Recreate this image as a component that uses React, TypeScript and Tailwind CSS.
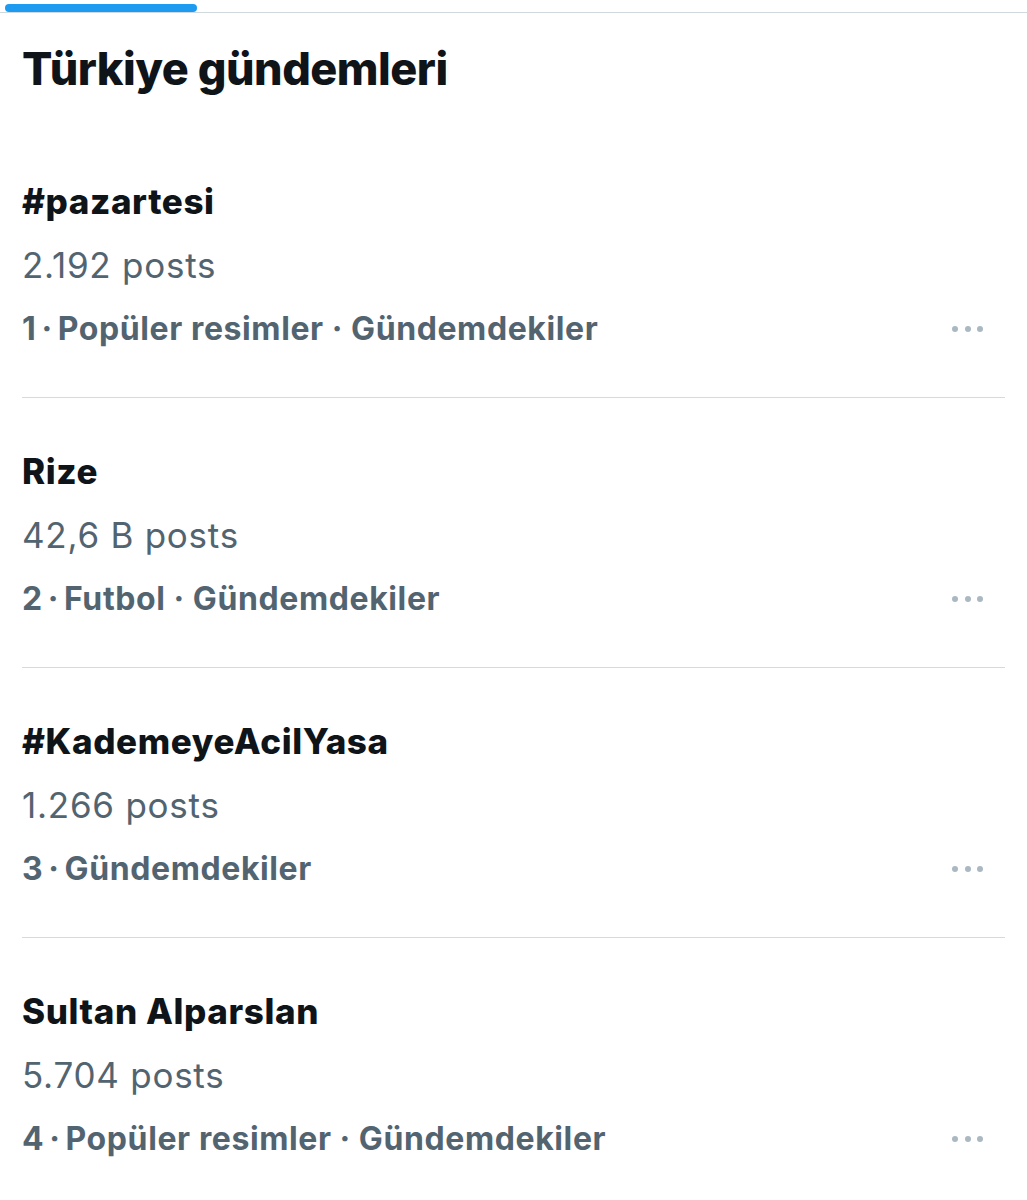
import React from 'react';

type Trend = {
  rank: number;
  name: string;
  posts: string;
  category?: string;
};

const trends: Trend[] = [
  { rank: 1, name: '#pazartesi', posts: '2.192 posts', category: 'Popüler resimler' },
  { rank: 2, name: 'Rize', posts: '42,6 B posts', category: 'Futbol' },
  { rank: 3, name: '#KademeyeAcilYasa', posts: '1.266 posts' },
  { rank: 4, name: 'Sultan Alparslan', posts: '5.704 posts', category: 'Popüler resimler' },
];

const MoreDots = () => (
  <div className="flex items-center gap-[6.5px] pr-[22px]">
    <span className="w-[6px] h-[6px] rounded-full bg-[#aab8c2]" />
    <span className="w-[6px] h-[6px] rounded-full bg-[#aab8c2]" />
    <span className="w-[6px] h-[6px] rounded-full bg-[#aab8c2]" />
  </div>
);

function TrendRow({ trend, last }: { trend: Trend; last: boolean }) {
  return (
    <div className={last ? 'pt-[41px] pb-[36px]' : 'pt-[41px] pb-[36px] border-b border-[#d6dadd]'}>
      <div className="text-[35px] leading-[64px] font-extrabold text-[#0f1419] tracking-[0.6px]">{trend.name}</div>
      <div className="text-[35px] leading-[64px] text-[#536471] tracking-[0.75px]">{trend.posts}</div>
      <div className="flex items-center justify-between">
        <div className="text-[32px] leading-[64px] font-bold text-[#536471] tracking-[0.6px]">
          {trend.rank}
          <span className="mx-[5px]">·</span>
          {trend.category && (
            <>
              {trend.category}
              <span className="mx-[8px]">·</span>
            </>
          )}
          Gündemdekiler
        </div>
        <MoreDots />
      </div>
    </div>
  );
}

export default function App() {
  return (
    <div className="w-[1027px] min-h-[1200px] bg-white" style={{ fontFamily: 'Inter, "Noto Sans", sans-serif' }}>
      {/* tab indicator */}
      <div className="h-[13px] pt-[4px] pl-[5px] border-b border-[#cfd9de]">
        <div className="h-[8px] w-[192px] rounded-full bg-[#1d9bf0]" />
      </div>

      <div className="px-[22px] pt-[28px] pb-[31px]">
        <h1 className="text-[45px] leading-[56px] font-extrabold text-[#0f1419] tracking-[-0.5px]">Türkiye gündemleri</h1>
      </div>

      <div className="mx-[22px]">
        {trends.map((t, i) => (
          <TrendRow key={t.rank} trend={t} last={i === trends.length - 1} />
        ))}
      </div>
    </div>
  );
}
